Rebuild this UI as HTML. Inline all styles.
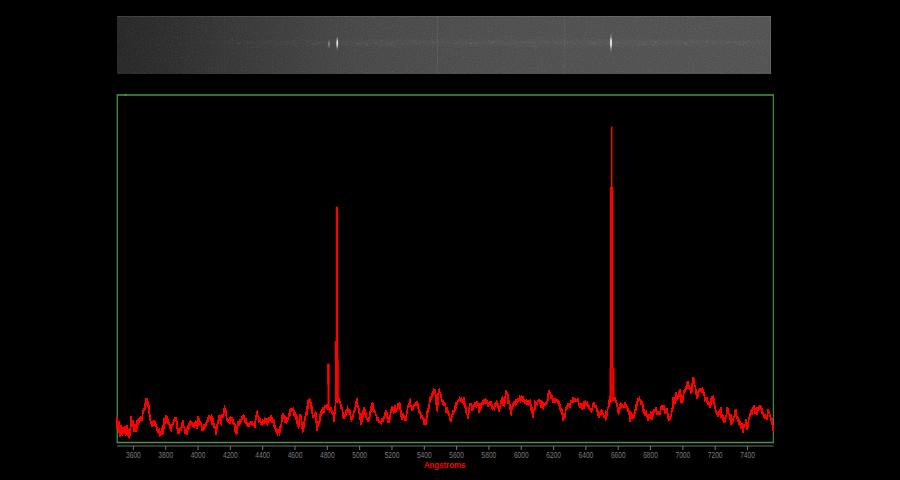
<!DOCTYPE html>
<html><head><meta charset="utf-8"><style>
html,body{margin:0;padding:0;background:#000;width:900px;height:480px;overflow:hidden}
svg{position:absolute;left:0;top:0;display:block}
</style></head><body>
<svg width="900" height="480" viewBox="0 0 900 480">
<defs>
<linearGradient id="sg" x1="117" y1="0" x2="771" y2="0" gradientUnits="userSpaceOnUse">
<stop offset="0" stop-color="#292929"/>
<stop offset="0.08" stop-color="#2f2f2f"/>
<stop offset="0.164" stop-color="#383838"/>
<stop offset="0.367" stop-color="#4a4a4a"/>
<stop offset="0.6" stop-color="#515151"/>
<stop offset="1" stop-color="#555555"/>
</linearGradient>
<linearGradient id="band" x1="0" y1="37" x2="0" y2="48" gradientUnits="userSpaceOnUse">
<stop offset="0" stop-color="#fff" stop-opacity="0"/>
<stop offset="0.5" stop-color="#fff" stop-opacity="0.035"/>
<stop offset="1" stop-color="#fff" stop-opacity="0"/>
</linearGradient>
<linearGradient id="bandx" x1="117" y1="0" x2="771" y2="0" gradientUnits="userSpaceOnUse">
<stop offset="0" stop-color="#fff" stop-opacity="0"/>
<stop offset="0.2" stop-color="#fff" stop-opacity="0.35"/>
<stop offset="0.4" stop-color="#fff" stop-opacity="0.8"/>
<stop offset="0.85" stop-color="#fff" stop-opacity="1"/>
<stop offset="1" stop-color="#fff" stop-opacity="0.3"/>
</linearGradient>
<mask id="bm"><rect x="117" y="16" width="654" height="58" fill="url(#bandx)"/></mask>
<radialGradient id="em"><stop offset="0" stop-color="#fafafa"/><stop offset="0.35" stop-color="#e0e0e0" stop-opacity="0.9"/><stop offset="0.6" stop-color="#aaa" stop-opacity="0.45"/><stop offset="1" stop-color="#777" stop-opacity="0"/></radialGradient>
<radialGradient id="em2"><stop offset="0" stop-color="#a0a0a0"/><stop offset="1" stop-color="#777" stop-opacity="0"/></radialGradient>
<filter id="nz" x="0" y="0" width="100%" height="100%" color-interpolation-filters="sRGB">
<feTurbulence type="fractalNoise" baseFrequency="0.8" numOctaves="1" seed="3"/>
<feColorMatrix type="matrix" values="0 0 0 0 1  0 0 0 0 1  0 0 0 0 1  0.2 0 0 0 -0.1"/>
</filter>
<filter id="nz2" x="0" y="0" width="100%" height="100%" color-interpolation-filters="sRGB">
<feTurbulence type="fractalNoise" baseFrequency="0.8" numOctaves="1" seed="3"/>
<feColorMatrix type="matrix" values="0 0 0 0 0  0 0 0 0 0  0 0 0 0 0  -0.2 0 0 0 0.1"/>
</filter>
</defs>
<rect x="117" y="16" width="654" height="58" fill="url(#sg)"/>
<rect x="117" y="16" width="654" height="58" filter="url(#nz)"/>
<rect x="117" y="16" width="654" height="58" filter="url(#nz2)"/>
<rect x="117" y="37" width="654" height="11" fill="url(#band)" mask="url(#bm)"/>
<rect x="117" y="16" width="654" height="1" fill="#fff" opacity="0.1"/>
<rect x="560.1" y="42.4" width="1" height="1" fill="#fff" opacity="0.10"/><rect x="675.4" y="39.7" width="1.5" height="1" fill="#fff" opacity="0.08"/><rect x="574.0" y="43.1" width="1.5" height="1" fill="#fff" opacity="0.06"/><rect x="431.8" y="42.0" width="1.5" height="1" fill="#fff" opacity="0.04"/><rect x="237.0" y="42.8" width="3" height="1" fill="#fff" opacity="0.09"/><rect x="314.6" y="43.8" width="1.5" height="1" fill="#fff" opacity="0.09"/><rect x="557.5" y="41.7" width="1" height="1" fill="#fff" opacity="0.10"/><rect x="341.0" y="42.8" width="1.5" height="1" fill="#fff" opacity="0.05"/><rect x="692.4" y="41.5" width="1.5" height="1" fill="#fff" opacity="0.07"/><rect x="326.3" y="46.5" width="1.5" height="1" fill="#fff" opacity="0.10"/><rect x="742.3" y="43.6" width="1.5" height="1" fill="#fff" opacity="0.06"/><rect x="726.0" y="41.7" width="2" height="1" fill="#fff" opacity="0.05"/><rect x="389.7" y="42.4" width="2" height="1" fill="#fff" opacity="0.08"/><rect x="265.0" y="42.4" width="2" height="1" fill="#fff" opacity="0.05"/><rect x="484.8" y="41.8" width="1" height="1" fill="#fff" opacity="0.08"/><rect x="365.8" y="44.2" width="2" height="1" fill="#fff" opacity="0.10"/><rect x="677.8" y="45.3" width="1" height="1" fill="#fff" opacity="0.06"/><rect x="470.0" y="42.8" width="1.5" height="1" fill="#fff" opacity="0.08"/><rect x="293.1" y="42.6" width="2" height="1" fill="#fff" opacity="0.06"/><rect x="703.1" y="45.5" width="3" height="1" fill="#fff" opacity="0.05"/><rect x="287.3" y="42.5" width="1" height="1" fill="#fff" opacity="0.09"/><rect x="459.5" y="39.6" width="1.5" height="1" fill="#fff" opacity="0.10"/><rect x="410.6" y="39.8" width="1" height="1" fill="#fff" opacity="0.05"/><rect x="395.6" y="40.2" width="1.5" height="1" fill="#fff" opacity="0.05"/><rect x="653.4" y="40.7" width="3" height="1" fill="#fff" opacity="0.05"/><rect x="315.6" y="40.7" width="3" height="1" fill="#fff" opacity="0.03"/><rect x="246.9" y="42.4" width="3" height="1" fill="#fff" opacity="0.05"/><rect x="307.2" y="41.0" width="1" height="1" fill="#fff" opacity="0.10"/><rect x="654.9" y="42.0" width="1.5" height="1" fill="#fff" opacity="0.10"/><rect x="564.1" y="43.4" width="1" height="1" fill="#fff" opacity="0.09"/><rect x="319.5" y="42.1" width="1.5" height="1" fill="#fff" opacity="0.06"/><rect x="470.2" y="42.9" width="1.5" height="1" fill="#fff" opacity="0.10"/><rect x="747.3" y="40.7" width="3" height="1" fill="#fff" opacity="0.08"/><rect x="375.2" y="43.0" width="1.5" height="1" fill="#fff" opacity="0.06"/><rect x="289.7" y="43.4" width="3" height="1" fill="#fff" opacity="0.04"/><rect x="689.9" y="40.7" width="3" height="1" fill="#fff" opacity="0.04"/><rect x="374.3" y="43.1" width="2" height="1" fill="#fff" opacity="0.06"/><rect x="598.1" y="39.3" width="2" height="1" fill="#fff" opacity="0.08"/><rect x="422.6" y="42.1" width="2" height="1" fill="#fff" opacity="0.06"/><rect x="737.1" y="41.3" width="1.5" height="1" fill="#fff" opacity="0.05"/><rect x="537.8" y="44.5" width="2" height="1" fill="#fff" opacity="0.05"/><rect x="475.4" y="42.6" width="2" height="1" fill="#fff" opacity="0.09"/><rect x="414.4" y="40.9" width="2" height="1" fill="#fff" opacity="0.09"/><rect x="718.8" y="40.4" width="3" height="1" fill="#fff" opacity="0.04"/><rect x="747.3" y="44.4" width="1.5" height="1" fill="#fff" opacity="0.07"/><rect x="335.3" y="42.0" width="3" height="1" fill="#fff" opacity="0.06"/><rect x="379.9" y="44.6" width="3" height="1" fill="#fff" opacity="0.06"/><rect x="390.4" y="43.6" width="2" height="1" fill="#fff" opacity="0.07"/><rect x="611.8" y="43.4" width="1.5" height="1" fill="#fff" opacity="0.06"/><rect x="346.1" y="42.7" width="1" height="1" fill="#fff" opacity="0.08"/><rect x="752.8" y="43.5" width="1" height="1" fill="#fff" opacity="0.09"/><rect x="398.2" y="42.4" width="1.5" height="1" fill="#fff" opacity="0.04"/><rect x="520.6" y="41.2" width="1" height="1" fill="#fff" opacity="0.08"/><rect x="542.8" y="43.3" width="2" height="1" fill="#fff" opacity="0.05"/><rect x="230.4" y="41.4" width="1" height="1" fill="#fff" opacity="0.06"/><rect x="595.1" y="43.2" width="1" height="1" fill="#fff" opacity="0.07"/><rect x="521.5" y="42.1" width="2" height="1" fill="#fff" opacity="0.07"/><rect x="737.9" y="43.8" width="3" height="1" fill="#fff" opacity="0.09"/><rect x="446.9" y="40.7" width="1.5" height="1" fill="#fff" opacity="0.06"/><rect x="545.8" y="41.7" width="1.5" height="1" fill="#fff" opacity="0.07"/><rect x="743.0" y="41.3" width="1" height="1" fill="#fff" opacity="0.09"/><rect x="432.4" y="41.6" width="1.5" height="1" fill="#fff" opacity="0.05"/><rect x="402.5" y="44.0" width="1.5" height="1" fill="#fff" opacity="0.06"/><rect x="491.5" y="41.1" width="3" height="1" fill="#fff" opacity="0.06"/><rect x="433.5" y="43.1" width="2" height="1" fill="#fff" opacity="0.07"/><rect x="493.0" y="41.8" width="2" height="1" fill="#fff" opacity="0.06"/><rect x="730.9" y="41.2" width="1" height="1" fill="#fff" opacity="0.04"/><rect x="294.6" y="45.9" width="3" height="1" fill="#fff" opacity="0.07"/><rect x="360.1" y="43.3" width="3" height="1" fill="#fff" opacity="0.06"/><rect x="512.3" y="42.7" width="3" height="1" fill="#fff" opacity="0.05"/><rect x="644.4" y="42.5" width="2" height="1" fill="#fff" opacity="0.04"/><rect x="385.4" y="43.8" width="3" height="1" fill="#fff" opacity="0.07"/><rect x="504.7" y="44.7" width="1" height="1" fill="#fff" opacity="0.09"/><rect x="633.0" y="40.0" width="2" height="1" fill="#fff" opacity="0.05"/><rect x="555.2" y="42.5" width="1.5" height="1" fill="#fff" opacity="0.05"/><rect x="249.3" y="42.1" width="3" height="1" fill="#fff" opacity="0.05"/><rect x="593.4" y="44.4" width="3" height="1" fill="#fff" opacity="0.04"/><rect x="642.5" y="44.0" width="3" height="1" fill="#fff" opacity="0.06"/><rect x="685.1" y="43.5" width="1.5" height="1" fill="#fff" opacity="0.08"/><rect x="706.4" y="41.0" width="1" height="1" fill="#fff" opacity="0.06"/><rect x="390.9" y="45.3" width="3" height="1" fill="#fff" opacity="0.07"/><rect x="712.7" y="42.6" width="3" height="1" fill="#fff" opacity="0.04"/><rect x="598.5" y="45.8" width="3" height="1" fill="#fff" opacity="0.07"/><rect x="540.5" y="39.7" width="1" height="1" fill="#fff" opacity="0.09"/><rect x="618.3" y="42.4" width="1" height="1" fill="#fff" opacity="0.03"/><rect x="406.5" y="43.2" width="1" height="1" fill="#fff" opacity="0.06"/><rect x="759.1" y="42.3" width="1.5" height="1" fill="#fff" opacity="0.09"/><rect x="555.7" y="42.0" width="1" height="1" fill="#fff" opacity="0.09"/><rect x="607.6" y="43.4" width="1.5" height="1" fill="#fff" opacity="0.09"/><rect x="327.0" y="43.5" width="1.5" height="1" fill="#fff" opacity="0.04"/><rect x="265.6" y="43.0" width="1" height="1" fill="#fff" opacity="0.08"/><rect x="378.3" y="44.5" width="1" height="1" fill="#fff" opacity="0.07"/><rect x="623.4" y="43.1" width="2" height="1" fill="#fff" opacity="0.06"/><rect x="593.3" y="41.9" width="2" height="1" fill="#fff" opacity="0.06"/><rect x="727.4" y="42.1" width="1.5" height="1" fill="#fff" opacity="0.08"/><rect x="531.4" y="42.9" width="2" height="1" fill="#fff" opacity="0.08"/><rect x="712.5" y="40.4" width="1.5" height="1" fill="#fff" opacity="0.05"/><rect x="364.7" y="41.7" width="1.5" height="1" fill="#fff" opacity="0.08"/><rect x="658.3" y="43.7" width="1.5" height="1" fill="#fff" opacity="0.06"/><rect x="608.0" y="41.2" width="1" height="1" fill="#fff" opacity="0.08"/><rect x="533.8" y="45.6" width="3" height="1" fill="#fff" opacity="0.07"/><rect x="356.5" y="43.2" width="3" height="1" fill="#fff" opacity="0.09"/><rect x="740.5" y="44.0" width="3" height="1" fill="#fff" opacity="0.07"/><rect x="258.4" y="43.7" width="3" height="1" fill="#fff" opacity="0.04"/><rect x="591.0" y="42.6" width="3" height="1" fill="#fff" opacity="0.10"/><rect x="664.9" y="43.3" width="3" height="1" fill="#fff" opacity="0.04"/><rect x="417.8" y="42.6" width="2" height="1" fill="#fff" opacity="0.07"/><rect x="651.9" y="43.9" width="2" height="1" fill="#fff" opacity="0.06"/><rect x="573.4" y="43.1" width="1" height="1" fill="#fff" opacity="0.09"/><rect x="544.1" y="40.9" width="1.5" height="1" fill="#fff" opacity="0.07"/><rect x="439.6" y="42.8" width="1" height="1" fill="#fff" opacity="0.04"/><rect x="489.7" y="42.7" width="2" height="1" fill="#fff" opacity="0.10"/><rect x="230.2" y="39.2" width="3" height="1" fill="#fff" opacity="0.07"/><rect x="401.3" y="43.1" width="1.5" height="1" fill="#fff" opacity="0.06"/><rect x="312.0" y="43.3" width="3" height="1" fill="#fff" opacity="0.06"/><rect x="310.6" y="43.8" width="2" height="1" fill="#fff" opacity="0.05"/><rect x="663.8" y="42.5" width="1" height="1" fill="#fff" opacity="0.03"/><rect x="412.5" y="40.1" width="2" height="1" fill="#fff" opacity="0.08"/><rect x="727.1" y="41.6" width="1.5" height="1" fill="#fff" opacity="0.06"/><rect x="292.5" y="40.3" width="2" height="1" fill="#fff" opacity="0.08"/><rect x="470.6" y="42.8" width="1" height="1" fill="#fff" opacity="0.03"/><rect x="534.6" y="47.6" width="3" height="1" fill="#fff" opacity="0.08"/><rect x="713.2" y="41.9" width="2" height="1" fill="#fff" opacity="0.04"/><rect x="380.1" y="40.2" width="3" height="1" fill="#fff" opacity="0.08"/><rect x="316.6" y="42.6" width="3" height="1" fill="#fff" opacity="0.10"/><rect x="615.0" y="44.9" width="3" height="1" fill="#fff" opacity="0.05"/><rect x="262.3" y="42.8" width="2" height="1" fill="#fff" opacity="0.03"/><rect x="727.9" y="40.9" width="1.5" height="1" fill="#fff" opacity="0.08"/><rect x="706.4" y="38.8" width="1.5" height="1" fill="#fff" opacity="0.03"/><rect x="571.5" y="42.7" width="1" height="1" fill="#fff" opacity="0.06"/><rect x="255.4" y="43.4" width="1" height="1" fill="#fff" opacity="0.07"/><rect x="733.6" y="41.0" width="3" height="1" fill="#fff" opacity="0.04"/><rect x="329.7" y="42.9" width="1" height="1" fill="#fff" opacity="0.09"/><rect x="517.2" y="46.1" width="1" height="1" fill="#fff" opacity="0.09"/><rect x="684.1" y="42.6" width="3" height="1" fill="#fff" opacity="0.07"/><rect x="454.3" y="42.8" width="1.5" height="1" fill="#fff" opacity="0.08"/><rect x="614.6" y="43.7" width="1.5" height="1" fill="#fff" opacity="0.06"/><rect x="523.9" y="41.8" width="3" height="1" fill="#fff" opacity="0.04"/><rect x="276.4" y="42.9" width="1.5" height="1" fill="#fff" opacity="0.05"/><rect x="514.5" y="39.6" width="1" height="1" fill="#fff" opacity="0.06"/><rect x="653.4" y="44.8" width="3" height="1" fill="#fff" opacity="0.05"/><rect x="601.3" y="42.0" width="1.5" height="1" fill="#fff" opacity="0.03"/><rect x="652.0" y="45.0" width="2" height="1" fill="#fff" opacity="0.04"/><rect x="431.3" y="40.3" width="1" height="1" fill="#fff" opacity="0.08"/><rect x="704.9" y="41.0" width="3" height="1" fill="#fff" opacity="0.07"/><rect x="306.0" y="40.3" width="1" height="1" fill="#fff" opacity="0.08"/><rect x="615.9" y="42.1" width="3" height="1" fill="#fff" opacity="0.09"/><rect x="527.8" y="41.3" width="2" height="1" fill="#fff" opacity="0.05"/><rect x="319.8" y="42.3" width="1" height="1" fill="#fff" opacity="0.05"/><rect x="517.5" y="44.9" width="1" height="1" fill="#fff" opacity="0.08"/><rect x="244.6" y="43.3" width="2" height="1" fill="#fff" opacity="0.06"/><rect x="733.1" y="42.8" width="1.5" height="1" fill="#fff" opacity="0.07"/><rect x="509.5" y="43.3" width="1.5" height="1" fill="#fff" opacity="0.06"/><rect x="539.7" y="43.3" width="1" height="1" fill="#fff" opacity="0.09"/><rect x="372.1" y="40.7" width="3" height="1" fill="#fff" opacity="0.04"/><rect x="651.2" y="41.1" width="2" height="1" fill="#fff" opacity="0.04"/><rect x="466.3" y="42.8" width="1" height="1" fill="#fff" opacity="0.04"/><rect x="636.8" y="44.6" width="3" height="1" fill="#fff" opacity="0.10"/><rect x="743.9" y="41.9" width="3" height="1" fill="#fff" opacity="0.09"/><rect x="593.3" y="42.1" width="1" height="1" fill="#fff" opacity="0.04"/><rect x="138.5" y="49.3" width="1" height="1" fill="#fff" opacity="0.09"/><rect x="692.8" y="39.0" width="1" height="1" fill="#fff" opacity="0.07"/><rect x="297.9" y="28.3" width="1" height="1" fill="#fff" opacity="0.10"/><rect x="350.1" y="59.1" width="1" height="1" fill="#fff" opacity="0.07"/><rect x="346.7" y="30.9" width="1" height="1" fill="#fff" opacity="0.14"/><rect x="665.7" y="64.6" width="1" height="1" fill="#fff" opacity="0.11"/><rect x="378.8" y="25.0" width="1" height="1" fill="#fff" opacity="0.12"/><rect x="437.0" y="19.1" width="1" height="1" fill="#fff" opacity="0.07"/><rect x="181.5" y="57.2" width="1" height="1" fill="#fff" opacity="0.13"/><rect x="247.2" y="61.6" width="1" height="1" fill="#fff" opacity="0.08"/><rect x="562.9" y="65.3" width="1" height="1" fill="#fff" opacity="0.11"/><rect x="639.6" y="38.1" width="1" height="1" fill="#fff" opacity="0.05"/><rect x="451.2" y="49.9" width="1" height="1" fill="#fff" opacity="0.07"/><rect x="371.1" y="34.8" width="1" height="1" fill="#fff" opacity="0.05"/><rect x="320.8" y="38.4" width="1" height="1" fill="#fff" opacity="0.09"/><rect x="576.3" y="39.3" width="1" height="1" fill="#fff" opacity="0.14"/><rect x="649.5" y="68.7" width="1" height="1" fill="#fff" opacity="0.11"/><rect x="554.6" y="47.1" width="1" height="1" fill="#fff" opacity="0.12"/><rect x="353.9" y="50.2" width="1" height="1" fill="#fff" opacity="0.11"/><rect x="458.0" y="32.9" width="1" height="1" fill="#fff" opacity="0.06"/><rect x="174.0" y="36.9" width="1" height="1" fill="#fff" opacity="0.10"/><rect x="613.0" y="57.0" width="1" height="1" fill="#fff" opacity="0.08"/><rect x="723.8" y="32.4" width="1" height="1" fill="#fff" opacity="0.11"/><rect x="164.0" y="59.2" width="1" height="1" fill="#fff" opacity="0.11"/><rect x="741.9" y="67.2" width="1" height="1" fill="#fff" opacity="0.11"/><rect x="664.4" y="58.4" width="1" height="1" fill="#fff" opacity="0.10"/><rect x="253.3" y="45.9" width="1" height="1" fill="#fff" opacity="0.13"/><rect x="273.1" y="71.6" width="1" height="1" fill="#fff" opacity="0.10"/><rect x="373.9" y="17.2" width="1" height="1" fill="#fff" opacity="0.09"/><rect x="233.3" y="53.6" width="1" height="1" fill="#fff" opacity="0.13"/><rect x="711.3" y="51.4" width="1" height="1" fill="#fff" opacity="0.08"/><rect x="188.1" y="55.6" width="1" height="1" fill="#fff" opacity="0.10"/><rect x="584.1" y="37.9" width="1" height="1" fill="#fff" opacity="0.13"/><rect x="255.9" y="34.1" width="1" height="1" fill="#fff" opacity="0.07"/><rect x="523.3" y="67.2" width="1" height="1" fill="#fff" opacity="0.07"/><rect x="530.2" y="59.9" width="1" height="1" fill="#fff" opacity="0.07"/><rect x="157.9" y="48.7" width="1" height="1" fill="#fff" opacity="0.12"/><rect x="690.7" y="57.8" width="1" height="1" fill="#fff" opacity="0.09"/><rect x="394.8" y="46.6" width="1" height="1" fill="#fff" opacity="0.13"/><rect x="314.4" y="32.7" width="1" height="1" fill="#fff" opacity="0.10"/><rect x="748.2" y="27.5" width="1" height="1" fill="#fff" opacity="0.05"/><rect x="192.5" y="48.5" width="1" height="1" fill="#fff" opacity="0.10"/><rect x="237.1" y="27.7" width="1" height="1" fill="#fff" opacity="0.10"/><rect x="539.1" y="55.7" width="1" height="1" fill="#fff" opacity="0.12"/><rect x="157.1" y="44.1" width="1" height="1" fill="#fff" opacity="0.13"/><rect x="742.1" y="34.8" width="1" height="1" fill="#fff" opacity="0.13"/><rect x="538.3" y="68.9" width="1" height="1" fill="#fff" opacity="0.07"/><rect x="572.0" y="64.1" width="1" height="1" fill="#fff" opacity="0.09"/><rect x="182.8" y="27.8" width="1" height="1" fill="#fff" opacity="0.06"/><rect x="177.6" y="25.5" width="1" height="1" fill="#fff" opacity="0.11"/><rect x="185.5" y="59.5" width="1" height="1" fill="#fff" opacity="0.12"/><rect x="650.1" y="62.0" width="1" height="1" fill="#fff" opacity="0.11"/><rect x="720.4" y="70.6" width="1" height="1" fill="#fff" opacity="0.11"/><rect x="747.2" y="22.8" width="1" height="1" fill="#fff" opacity="0.06"/><rect x="159.1" y="28.6" width="1" height="1" fill="#fff" opacity="0.08"/><rect x="416.5" y="55.1" width="1" height="1" fill="#fff" opacity="0.12"/><rect x="171.7" y="39.6" width="1" height="1" fill="#fff" opacity="0.10"/><rect x="362.0" y="23.6" width="1" height="1" fill="#fff" opacity="0.10"/><rect x="361.5" y="55.3" width="1" height="1" fill="#fff" opacity="0.09"/><rect x="745.6" y="69.9" width="1" height="1" fill="#fff" opacity="0.06"/><rect x="613.1" y="57.4" width="1" height="1" fill="#fff" opacity="0.08"/><rect x="193.3" y="43.8" width="1" height="1" fill="#fff" opacity="0.08"/><rect x="598.5" y="68.4" width="1" height="1" fill="#fff" opacity="0.08"/><rect x="306.8" y="44.9" width="1" height="1" fill="#fff" opacity="0.11"/><rect x="632.2" y="49.2" width="1" height="1" fill="#fff" opacity="0.08"/><rect x="337.0" y="64.5" width="1" height="1" fill="#fff" opacity="0.10"/><rect x="149.9" y="40.6" width="1" height="1" fill="#fff" opacity="0.07"/><rect x="552.0" y="21.1" width="1" height="1" fill="#fff" opacity="0.07"/><rect x="179.7" y="43.7" width="1" height="1" fill="#fff" opacity="0.14"/><rect x="470.5" y="38.6" width="1" height="1" fill="#fff" opacity="0.13"/><rect x="177.0" y="36.9" width="1" height="1" fill="#fff" opacity="0.12"/><rect x="120.3" y="59.9" width="1" height="1" fill="#fff" opacity="0.08"/><rect x="127.7" y="31.0" width="1" height="1" fill="#fff" opacity="0.09"/><rect x="367.0" y="45.9" width="1" height="1" fill="#fff" opacity="0.05"/><rect x="259.7" y="71.6" width="1" height="1" fill="#fff" opacity="0.09"/><rect x="425.1" y="21.8" width="1" height="1" fill="#fff" opacity="0.08"/><rect x="740.5" y="55.5" width="1" height="1" fill="#fff" opacity="0.10"/><rect x="151.6" y="39.0" width="1" height="1" fill="#fff" opacity="0.12"/><rect x="400.9" y="50.2" width="1" height="1" fill="#fff" opacity="0.13"/><rect x="538.3" y="52.6" width="1" height="1" fill="#fff" opacity="0.05"/><rect x="132.6" y="60.1" width="1" height="1" fill="#fff" opacity="0.09"/><rect x="687.9" y="63.2" width="1" height="1" fill="#fff" opacity="0.13"/><rect x="364.2" y="72.9" width="1" height="1" fill="#fff" opacity="0.12"/><rect x="699.3" y="25.3" width="1" height="1" fill="#fff" opacity="0.12"/><rect x="392.7" y="71.4" width="1" height="1" fill="#fff" opacity="0.14"/><rect x="258.5" y="40.6" width="1" height="1" fill="#fff" opacity="0.07"/><rect x="423.8" y="33.0" width="1" height="1" fill="#fff" opacity="0.11"/><rect x="197.5" y="26.5" width="1" height="1" fill="#fff" opacity="0.09"/><rect x="165.3" y="38.3" width="1" height="1" fill="#fff" opacity="0.13"/><rect x="695.1" y="28.0" width="1" height="1" fill="#fff" opacity="0.05"/><rect x="657.9" y="70.8" width="1" height="1" fill="#fff" opacity="0.10"/><rect x="206.0" y="30.2" width="1" height="1" fill="#fff" opacity="0.13"/><rect x="729.2" y="18.7" width="1" height="1" fill="#fff" opacity="0.07"/><rect x="397.1" y="31.9" width="1" height="1" fill="#fff" opacity="0.12"/><rect x="360.5" y="60.4" width="1" height="1" fill="#fff" opacity="0.06"/><rect x="455.5" y="71.6" width="1" height="1" fill="#fff" opacity="0.11"/><rect x="175.8" y="23.2" width="1" height="1" fill="#fff" opacity="0.11"/><rect x="361.9" y="37.6" width="1" height="1" fill="#fff" opacity="0.09"/><rect x="496.9" y="71.1" width="1" height="1" fill="#fff" opacity="0.07"/><rect x="488.3" y="31.7" width="1" height="1" fill="#fff" opacity="0.10"/><rect x="594.6" y="24.5" width="1" height="1" fill="#fff" opacity="0.09"/><rect x="577.9" y="17.5" width="1" height="1" fill="#fff" opacity="0.12"/><rect x="390.5" y="45.2" width="1" height="1" fill="#fff" opacity="0.10"/><rect x="634.8" y="20.1" width="1" height="1" fill="#fff" opacity="0.10"/><rect x="142.0" y="38.6" width="1" height="1" fill="#fff" opacity="0.08"/><rect x="131.0" y="33.7" width="1" height="1" fill="#fff" opacity="0.09"/><rect x="544.6" y="68.8" width="1" height="1" fill="#fff" opacity="0.08"/><rect x="463.1" y="56.9" width="1" height="1" fill="#fff" opacity="0.13"/><rect x="737.1" y="72.3" width="1" height="1" fill="#fff" opacity="0.08"/><rect x="225.8" y="69.2" width="1" height="1" fill="#fff" opacity="0.06"/><rect x="410.0" y="58.2" width="1" height="1" fill="#fff" opacity="0.10"/><rect x="370.9" y="68.8" width="1" height="1" fill="#fff" opacity="0.08"/><rect x="477.3" y="63.5" width="1" height="1" fill="#fff" opacity="0.06"/><rect x="346.2" y="44.7" width="1" height="1" fill="#fff" opacity="0.10"/><rect x="252.4" y="42.4" width="1" height="1" fill="#fff" opacity="0.06"/><rect x="174.4" y="36.2" width="1" height="1" fill="#fff" opacity="0.06"/><rect x="748.8" y="31.7" width="1" height="1" fill="#fff" opacity="0.07"/><rect x="628.8" y="58.5" width="1" height="1" fill="#fff" opacity="0.07"/><rect x="658.4" y="52.0" width="1" height="1" fill="#fff" opacity="0.08"/><rect x="527.6" y="30.8" width="1" height="1" fill="#fff" opacity="0.07"/>
<rect x="224" y="16" width="1" height="58" fill="#fff" opacity="0.025"/>
<rect x="437" y="16" width="1" height="58" fill="#fff" opacity="0.06"/>
<rect x="564" y="16" width="1" height="58" fill="#fff" opacity="0.05"/>
<rect x="770" y="16" width="1" height="58" fill="#fff" opacity="0.08"/>
<ellipse cx="329" cy="44" rx="1.5" ry="5" fill="url(#em2)"/>
<ellipse cx="337.2" cy="43.2" rx="1.6" ry="8.5" fill="url(#em)"/>
<ellipse cx="611" cy="42.8" rx="1.9" ry="11" fill="url(#em)"/>
<g stroke="#3f8f3f"><line x1="117.3" y1="95" x2="773.1" y2="95" stroke-width="2" stroke="#357035"/>
<line x1="117.3" y1="94" x2="117.3" y2="443" stroke-width="1.4" stroke="#3c863c"/>
<line x1="773.4" y1="94" x2="773.4" y2="443" stroke-width="1.3" stroke="#408640"/>
<line x1="116.8" y1="442.5" x2="774" y2="442.5" stroke-width="1.3" stroke="#4a904a"/></g>
<rect x="124.8" y="94.2" width="1.6" height="1.4" fill="#ccc" opacity="0.45"/>
<line x1="117" y1="446" x2="773.6" y2="446" stroke="#363636" stroke-width="2"/>
<g stroke="#777" stroke-width="1"><line x1="133.40" y1="446" x2="133.40" y2="450"/><line x1="165.72" y1="446" x2="165.72" y2="450"/><line x1="198.04" y1="446" x2="198.04" y2="450"/><line x1="230.37" y1="446" x2="230.37" y2="450"/><line x1="262.69" y1="446" x2="262.69" y2="450"/><line x1="295.01" y1="446" x2="295.01" y2="450"/><line x1="327.33" y1="446" x2="327.33" y2="450"/><line x1="359.65" y1="446" x2="359.65" y2="450"/><line x1="391.98" y1="446" x2="391.98" y2="450"/><line x1="424.30" y1="446" x2="424.30" y2="450"/><line x1="456.62" y1="446" x2="456.62" y2="450"/><line x1="488.94" y1="446" x2="488.94" y2="450"/><line x1="521.26" y1="446" x2="521.26" y2="450"/><line x1="553.59" y1="446" x2="553.59" y2="450"/><line x1="585.91" y1="446" x2="585.91" y2="450"/><line x1="618.23" y1="446" x2="618.23" y2="450"/><line x1="650.55" y1="446" x2="650.55" y2="450"/><line x1="682.87" y1="446" x2="682.87" y2="450"/><line x1="715.20" y1="446" x2="715.20" y2="450"/><line x1="747.52" y1="446" x2="747.52" y2="450"/></g>
<g fill="#7c7c7c" font-family="Liberation Sans, sans-serif" font-size="8.2"><text x="126.05" y="457.8" textLength="14.7" lengthAdjust="spacingAndGlyphs">3600</text><text x="158.37" y="457.8" textLength="14.7" lengthAdjust="spacingAndGlyphs">3800</text><text x="190.69" y="457.8" textLength="14.7" lengthAdjust="spacingAndGlyphs">4000</text><text x="223.02" y="457.8" textLength="14.7" lengthAdjust="spacingAndGlyphs">4200</text><text x="255.34" y="457.8" textLength="14.7" lengthAdjust="spacingAndGlyphs">4400</text><text x="287.66" y="457.8" textLength="14.7" lengthAdjust="spacingAndGlyphs">4600</text><text x="319.98" y="457.8" textLength="14.7" lengthAdjust="spacingAndGlyphs">4800</text><text x="352.30" y="457.8" textLength="14.7" lengthAdjust="spacingAndGlyphs">5000</text><text x="384.63" y="457.8" textLength="14.7" lengthAdjust="spacingAndGlyphs">5200</text><text x="416.95" y="457.8" textLength="14.7" lengthAdjust="spacingAndGlyphs">5400</text><text x="449.27" y="457.8" textLength="14.7" lengthAdjust="spacingAndGlyphs">5600</text><text x="481.59" y="457.8" textLength="14.7" lengthAdjust="spacingAndGlyphs">5800</text><text x="513.91" y="457.8" textLength="14.7" lengthAdjust="spacingAndGlyphs">6000</text><text x="546.24" y="457.8" textLength="14.7" lengthAdjust="spacingAndGlyphs">6200</text><text x="578.56" y="457.8" textLength="14.7" lengthAdjust="spacingAndGlyphs">6400</text><text x="610.88" y="457.8" textLength="14.7" lengthAdjust="spacingAndGlyphs">6600</text><text x="643.20" y="457.8" textLength="14.7" lengthAdjust="spacingAndGlyphs">6800</text><text x="675.52" y="457.8" textLength="14.7" lengthAdjust="spacingAndGlyphs">7000</text><text x="707.85" y="457.8" textLength="14.7" lengthAdjust="spacingAndGlyphs">7200</text><text x="740.17" y="457.8" textLength="14.7" lengthAdjust="spacingAndGlyphs">7400</text></g>
<text x="423.9" y="467.6" fill="#ff0000" font-family="Liberation Sans, sans-serif" font-size="8.6" font-weight="bold" textLength="41.4" lengthAdjust="spacingAndGlyphs">Angstroms</text>
<path d="M117.0,417.2 L117.4,428.6 L117.8,425.3 L118.2,423.9 L118.6,433.4 L119.0,428.0 L119.4,421.1 L119.8,432.6 L120.2,436.6 L120.6,428.4 L121.0,424.6 L121.4,429.2 L121.8,434.2 L122.2,434.4 L122.6,429.5 L123.0,427.4 L123.4,432.1 L123.8,433.5 L124.2,429.9 L124.6,429.8 L125.0,425.9 L125.4,427.5 L125.8,429.2 L126.2,433.4 L126.6,432.7 L127.0,425.5 L127.4,430.3 L127.8,428.7 L128.2,435.6 L128.6,433.7 L129.0,438.3 L129.4,437.0 L129.8,434.7 L130.2,433.6 L130.6,422.8 L131.0,416.5 L131.4,425.7 L131.8,427.2 L132.2,425.2 L132.6,423.4 L133.0,419.6 L133.4,424.5 L133.8,431.6 L134.2,423.6 L134.6,427.1 L135.0,425.7 L135.4,427.3 L135.8,429.7 L136.2,432.1 L136.6,425.9 L137.0,426.6 L137.4,420.2 L137.8,420.9 L138.2,422.6 L138.6,421.2 L139.0,422.4 L139.4,418.0 L139.8,418.5 L140.2,420.7 L140.6,418.1 L141.0,416.3 L141.4,418.6 L141.8,419.3 L142.2,420.5 L142.6,413.7 L143.0,410.1 L143.4,411.5 L143.8,408.3 L144.2,411.2 L144.6,409.8 L145.0,403.4 L145.4,403.0 L145.8,405.0 L146.2,400.4 L146.6,401.1 L147.0,399.4 L147.4,397.9 L147.8,403.2 L148.2,406.0 L148.6,408.2 L149.0,407.6 L149.4,413.6 L149.8,414.6 L150.2,420.0 L150.6,422.4 L151.0,424.3 L151.4,421.0 L151.8,426.0 L152.2,425.9 L152.6,426.0 L153.0,424.2 L153.4,421.4 L153.8,420.3 L154.2,423.0 L154.6,425.3 L155.0,425.5 L155.4,421.4 L155.8,425.9 L156.2,424.0 L156.6,427.2 L157.0,430.2 L157.4,430.2 L157.8,429.2 L158.2,432.6 L158.6,430.8 L159.0,430.3 L159.4,434.1 L159.8,435.0 L160.2,432.5 L160.6,433.0 L161.0,434.4 L161.4,433.7 L161.8,434.7 L162.2,426.8 L162.6,434.3 L163.0,429.4 L163.4,425.4 L163.8,429.0 L164.2,417.7 L164.6,422.8 L165.0,421.9 L165.4,422.7 L165.8,422.0 L166.2,415.4 L166.6,419.6 L167.0,417.3 L167.4,418.4 L167.8,420.6 L168.2,423.5 L168.6,425.2 L169.0,421.9 L169.4,425.2 L169.8,426.8 L170.2,426.2 L170.6,429.5 L171.0,430.0 L171.4,427.7 L171.8,426.9 L172.2,425.6 L172.6,421.8 L173.0,425.2 L173.4,422.7 L173.8,420.0 L174.2,422.1 L174.6,417.2 L175.0,418.2 L175.4,421.2 L175.8,417.0 L176.2,418.5 L176.6,420.6 L177.0,425.1 L177.4,428.6 L177.8,431.5 L178.2,430.7 L178.6,432.5 L179.0,432.8 L179.4,430.8 L179.8,429.9 L180.2,427.8 L180.6,430.0 L181.0,429.8 L181.4,427.0 L181.8,423.5 L182.2,423.9 L182.6,420.3 L183.0,423.5 L183.4,427.5 L183.8,427.6 L184.2,425.9 L184.6,428.6 L185.0,433.7 L185.4,432.7 L185.8,434.3 L186.2,431.9 L186.6,428.8 L187.0,435.0 L187.4,426.8 L187.8,426.1 L188.2,426.0 L188.6,429.7 L189.0,424.1 L189.4,423.4 L189.8,424.6 L190.2,423.4 L190.6,420.6 L191.0,424.2 L191.4,423.9 L191.8,424.4 L192.2,422.2 L192.6,425.3 L193.0,423.1 L193.4,426.5 L193.8,428.1 L194.2,423.0 L194.6,425.4 L195.0,422.1 L195.4,423.3 L195.8,421.8 L196.2,422.1 L196.6,425.6 L197.0,427.3 L197.4,426.1 L197.8,424.9 L198.2,415.6 L198.6,421.6 L199.0,418.6 L199.4,419.1 L199.8,423.5 L200.2,424.7 L200.6,422.4 L201.0,422.9 L201.4,425.1 L201.8,429.2 L202.2,430.1 L202.6,429.3 L203.0,429.5 L203.4,426.6 L203.8,424.1 L204.2,427.7 L204.6,428.4 L205.0,424.9 L205.4,423.8 L205.8,424.7 L206.2,424.9 L206.6,423.4 L207.0,419.8 L207.4,421.6 L207.8,421.3 L208.2,418.7 L208.6,415.6 L209.0,415.6 L209.4,418.4 L209.8,416.0 L210.2,417.9 L210.6,418.2 L211.0,417.3 L211.4,420.6 L211.8,420.6 L212.2,424.4 L212.6,423.3 L213.0,418.9 L213.4,419.6 L213.8,426.4 L214.2,425.9 L214.6,427.0 L215.0,428.5 L215.4,426.1 L215.8,435.0 L216.2,427.0 L216.6,424.8 L217.0,430.4 L217.4,424.1 L217.8,423.7 L218.2,420.6 L218.6,420.4 L219.0,420.4 L219.4,415.0 L219.8,416.0 L220.2,414.9 L220.6,422.1 L221.0,422.9 L221.4,415.6 L221.8,417.8 L222.2,415.2 L222.6,415.3 L223.0,416.6 L223.4,415.5 L223.8,412.2 L224.2,408.6 L224.6,407.6 L225.0,410.4 L225.4,408.3 L225.8,410.7 L226.2,413.5 L226.6,418.4 L227.0,420.5 L227.4,420.9 L227.8,419.2 L228.2,421.1 L228.6,421.3 L229.0,422.6 L229.4,420.0 L229.8,423.8 L230.2,416.9 L230.6,420.0 L231.0,418.0 L231.4,418.7 L231.8,419.6 L232.2,419.0 L232.6,418.6 L233.0,422.9 L233.4,423.6 L233.8,424.2 L234.2,423.4 L234.6,424.2 L235.0,425.9 L235.4,431.3 L235.8,430.8 L236.2,433.8 L236.6,434.1 L237.0,427.1 L237.4,427.2 L237.8,425.5 L238.2,422.9 L238.6,423.2 L239.0,425.5 L239.4,420.6 L239.8,423.5 L240.2,419.4 L240.6,420.7 L241.0,422.9 L241.4,419.8 L241.8,417.6 L242.2,417.0 L242.6,419.5 L243.0,416.3 L243.4,415.2 L243.8,415.9 L244.2,417.7 L244.6,418.6 L245.0,422.1 L245.4,422.4 L245.8,418.2 L246.2,420.8 L246.6,424.8 L247.0,426.0 L247.4,422.1 L247.8,427.2 L248.2,424.0 L248.6,424.3 L249.0,427.3 L249.4,424.2 L249.8,424.4 L250.2,422.7 L250.6,425.1 L251.0,421.9 L251.4,421.6 L251.8,421.9 L252.2,422.1 L252.6,423.0 L253.0,423.8 L253.4,425.4 L253.8,423.6 L254.2,425.4 L254.6,426.5 L255.0,427.9 L255.4,420.8 L255.8,418.4 L256.2,417.4 L256.6,412.1 L257.0,411.7 L257.4,415.9 L257.8,415.6 L258.2,416.6 L258.6,416.7 L259.0,419.8 L259.4,418.8 L259.8,418.9 L260.2,419.7 L260.6,423.3 L261.0,420.9 L261.4,424.5 L261.8,423.2 L262.2,422.5 L262.6,419.6 L263.0,423.7 L263.4,423.2 L263.8,421.5 L264.2,423.6 L264.6,419.9 L265.0,420.8 L265.4,423.1 L265.8,418.2 L266.2,419.5 L266.6,420.8 L267.0,424.1 L267.4,424.6 L267.8,417.6 L268.2,421.6 L268.6,417.6 L269.0,420.1 L269.4,419.3 L269.8,419.6 L270.2,417.6 L270.6,417.5 L271.0,416.3 L271.4,417.2 L271.8,423.4 L272.2,420.1 L272.6,419.2 L273.0,422.0 L273.4,422.7 L273.8,421.8 L274.2,424.6 L274.6,428.5 L275.0,425.1 L275.4,429.3 L275.8,430.3 L276.2,427.7 L276.6,432.8 L277.0,433.5 L277.4,431.5 L277.8,430.1 L278.2,430.1 L278.6,428.9 L279.0,431.3 L279.4,433.2 L279.8,432.0 L280.2,427.7 L280.6,424.9 L281.0,424.7 L281.4,425.5 L281.8,419.3 L282.2,415.7 L282.6,414.0 L283.0,414.2 L283.4,416.5 L283.8,419.2 L284.2,417.5 L284.6,415.6 L285.0,420.2 L285.4,422.8 L285.8,421.4 L286.2,422.1 L286.6,419.4 L287.0,420.3 L287.4,421.9 L287.8,417.3 L288.2,420.0 L288.6,416.5 L289.0,413.3 L289.4,417.1 L289.8,415.7 L290.2,411.2 L290.6,411.8 L291.0,408.1 L291.4,410.6 L291.8,409.9 L292.2,410.0 L292.6,408.6 L293.0,408.4 L293.4,411.2 L293.8,412.2 L294.2,415.2 L294.6,416.6 L295.0,413.3 L295.4,414.2 L295.8,415.1 L296.2,420.0 L296.6,415.8 L297.0,419.0 L297.4,424.4 L297.8,422.7 L298.2,425.9 L298.6,426.7 L299.0,422.0 L299.4,419.7 L299.8,419.3 L300.2,414.5 L300.6,415.7 L301.0,416.4 L301.4,419.1 L301.8,424.8 L302.2,427.0 L302.6,431.4 L303.0,430.9 L303.4,430.0 L303.8,426.9 L304.2,421.4 L304.6,420.8 L305.0,416.3 L305.4,417.9 L305.8,412.5 L306.2,416.2 L306.6,415.0 L307.0,410.8 L307.4,405.9 L307.8,406.5 L308.2,402.1 L308.6,402.4 L309.0,399.5 L309.4,400.8 L309.8,399.9 L310.2,401.2 L310.6,402.0 L311.0,402.6 L311.4,408.5 L311.8,406.2 L312.2,411.2 L312.6,415.7 L313.0,415.6 L313.4,418.2 L313.8,416.0 L314.2,417.2 L314.6,413.2 L315.0,415.9 L315.4,413.7 L315.8,411.6 L316.2,418.4 L316.6,427.9 L317.0,431.2 L317.4,428.3 L317.8,425.8 L318.2,421.5 L318.6,423.6 L319.0,423.1 L319.4,423.0 L319.8,420.7 L320.2,415.2 L320.6,413.9 L321.0,412.3 L321.4,411.3 L321.8,413.2 L322.2,412.5 L322.6,411.2 L323.0,408.6 L323.4,409.0 L323.8,413.2 L324.2,407.3 L324.6,408.2 L325.0,405.8 L325.4,405.8 L325.8,408.2 L326.2,405.7 L326.6,404.3 L327.0,407.7 L327.4,408.4 L327.8,409.7 L328.2,406.5 L328.6,408.2 L329.0,409.1 L329.4,408.9 L329.8,410.8 L330.2,410.0 L330.6,408.2 L331.0,407.9 L331.4,408.5 L331.8,411.7 L332.2,413.1 L332.6,412.2 L333.0,412.7 L333.4,413.5 L333.8,420.9 L334.2,420.9 L334.6,413.8 L335.0,410.7 L335.4,406.2 L335.8,401.2 L336.2,399.7 L336.6,401.3 L337.0,398.6 L337.4,397.5 L337.8,400.3 L338.2,399.4 L338.6,398.3 L339.0,398.6 L339.4,398.7 L339.8,403.4 L340.2,401.7 L340.6,403.6 L341.0,408.0 L341.4,409.3 L341.8,407.2 L342.2,408.0 L342.6,412.3 L343.0,412.8 L343.4,417.9 L343.8,418.0 L344.2,416.7 L344.6,416.7 L345.0,415.5 L345.4,413.9 L345.8,415.9 L346.2,410.8 L346.6,410.2 L347.0,411.5 L347.4,410.2 L347.8,408.3 L348.2,409.6 L348.6,411.1 L349.0,410.2 L349.4,408.9 L349.8,411.5 L350.2,412.8 L350.6,417.7 L351.0,419.3 L351.4,420.1 L351.8,418.7 L352.2,416.6 L352.6,415.8 L353.0,417.9 L353.4,414.1 L353.8,411.4 L354.2,410.6 L354.6,411.2 L355.0,406.8 L355.4,410.1 L355.8,404.8 L356.2,403.3 L356.6,398.2 L357.0,402.3 L357.4,405.4 L357.8,405.5 L358.2,407.4 L358.6,408.4 L359.0,411.7 L359.4,413.7 L359.8,417.9 L360.2,417.3 L360.6,413.2 L361.0,421.6 L361.4,424.8 L361.8,420.1 L362.2,420.3 L362.6,417.5 L363.0,416.3 L363.4,410.6 L363.8,406.9 L364.2,408.0 L364.6,410.3 L365.0,410.3 L365.4,415.1 L365.8,412.1 L366.2,416.4 L366.6,418.4 L367.0,419.0 L367.4,418.8 L367.8,418.9 L368.2,422.2 L368.6,421.1 L369.0,417.2 L369.4,419.1 L369.8,414.9 L370.2,411.8 L370.6,411.7 L371.0,408.9 L371.4,409.6 L371.8,406.7 L372.2,403.2 L372.6,403.0 L373.0,407.6 L373.4,406.8 L373.8,410.5 L374.2,411.0 L374.6,411.3 L375.0,412.2 L375.4,413.3 L375.8,414.3 L376.2,415.7 L376.6,416.9 L377.0,417.7 L377.4,420.5 L377.8,418.6 L378.2,418.2 L378.6,420.6 L379.0,423.1 L379.4,420.1 L379.8,421.4 L380.2,421.6 L380.6,424.0 L381.0,422.6 L381.4,423.1 L381.8,417.8 L382.2,420.4 L382.6,419.2 L383.0,421.4 L383.4,418.0 L383.8,417.4 L384.2,417.7 L384.6,415.6 L385.0,413.4 L385.4,412.3 L385.8,413.4 L386.2,413.2 L386.6,412.3 L387.0,416.0 L387.4,419.0 L387.8,423.0 L388.2,422.0 L388.6,422.9 L389.0,418.2 L389.4,417.2 L389.8,415.8 L390.2,419.6 L390.6,410.3 L391.0,413.1 L391.4,409.1 L391.8,406.4 L392.2,408.2 L392.6,408.2 L393.0,411.1 L393.4,409.9 L393.8,411.6 L394.2,410.4 L394.6,411.0 L395.0,405.4 L395.4,413.1 L395.8,410.3 L396.2,409.6 L396.6,409.6 L397.0,409.1 L397.4,409.3 L397.8,403.1 L398.2,409.4 L398.6,404.9 L399.0,404.9 L399.4,402.7 L399.8,404.0 L400.2,409.8 L400.6,410.3 L401.0,416.3 L401.4,417.3 L401.8,420.0 L402.2,418.6 L402.6,414.9 L403.0,412.8 L403.4,417.3 L403.8,417.1 L404.2,415.5 L404.6,420.2 L405.0,420.5 L405.4,420.2 L405.8,420.5 L406.2,419.1 L406.6,413.7 L407.0,412.4 L407.4,409.9 L407.8,406.7 L408.2,405.5 L408.6,404.6 L409.0,405.4 L409.4,403.4 L409.8,399.7 L410.2,399.4 L410.6,404.8 L411.0,407.1 L411.4,404.7 L411.8,407.5 L412.2,409.8 L412.6,409.2 L413.0,409.2 L413.4,407.1 L413.8,406.6 L414.2,404.8 L414.6,405.5 L415.0,404.2 L415.4,403.6 L415.8,405.7 L416.2,403.4 L416.6,402.4 L417.0,401.0 L417.4,403.0 L417.8,403.6 L418.2,408.2 L418.6,409.0 L419.0,413.2 L419.4,411.5 L419.8,412.7 L420.2,412.5 L420.6,414.4 L421.0,416.6 L421.4,416.1 L421.8,417.4 L422.2,415.4 L422.6,419.3 L423.0,417.0 L423.4,419.9 L423.8,425.2 L424.2,418.5 L424.6,419.9 L425.0,420.9 L425.4,420.5 L425.8,425.2 L426.2,420.5 L426.6,419.0 L427.0,415.7 L427.4,411.6 L427.8,412.0 L428.2,410.8 L428.6,406.4 L429.0,407.0 L429.4,404.2 L429.8,402.0 L430.2,396.6 L430.6,400.3 L431.0,396.5 L431.4,396.2 L431.8,396.7 L432.2,393.5 L432.6,392.6 L433.0,395.3 L433.4,392.0 L433.8,390.0 L434.2,390.4 L434.6,389.2 L435.0,392.6 L435.4,393.6 L435.8,394.2 L436.2,404.2 L436.6,405.4 L437.0,411.4 L437.4,410.0 L437.8,402.4 L438.2,395.5 L438.6,391.3 L439.0,390.2 L439.4,391.9 L439.8,392.3 L440.2,392.6 L440.6,393.7 L441.0,394.8 L441.4,397.9 L441.8,400.9 L442.2,401.6 L442.6,400.2 L443.0,400.7 L443.4,404.9 L443.8,405.2 L444.2,403.6 L444.6,403.0 L445.0,404.1 L445.4,405.4 L445.8,409.0 L446.2,413.0 L446.6,407.3 L447.0,408.8 L447.4,411.3 L447.8,413.8 L448.2,410.6 L448.6,412.7 L449.0,414.0 L449.4,416.2 L449.8,419.1 L450.2,420.8 L450.6,421.1 L451.0,421.2 L451.4,417.8 L451.8,417.1 L452.2,414.9 L452.6,413.2 L453.0,411.4 L453.4,409.7 L453.8,412.0 L454.2,411.2 L454.6,410.8 L455.0,409.8 L455.4,405.5 L455.8,408.5 L456.2,404.2 L456.6,405.1 L457.0,402.7 L457.4,402.6 L457.8,401.1 L458.2,400.4 L458.6,400.7 L459.0,400.4 L459.4,399.1 L459.8,400.6 L460.2,400.9 L460.6,398.9 L461.0,398.4 L461.4,400.0 L461.8,400.7 L462.2,402.6 L462.6,401.2 L463.0,400.2 L463.4,398.8 L463.8,396.8 L464.2,404.5 L464.6,405.7 L465.0,404.1 L465.4,404.4 L465.8,406.9 L466.2,410.6 L466.6,414.4 L467.0,414.5 L467.4,415.2 L467.8,418.4 L468.2,415.0 L468.6,413.2 L469.0,411.0 L469.4,407.0 L469.8,404.5 L470.2,404.9 L470.6,403.0 L471.0,404.7 L471.4,404.6 L471.8,405.2 L472.2,410.2 L472.6,410.2 L473.0,408.1 L473.4,405.7 L473.8,406.2 L474.2,405.6 L474.6,402.4 L475.0,403.8 L475.4,405.6 L475.8,406.2 L476.2,403.1 L476.6,400.8 L477.0,403.7 L477.4,402.7 L477.8,406.2 L478.2,404.6 L478.6,405.2 L479.0,407.8 L479.4,412.8 L479.8,408.8 L480.2,404.7 L480.6,405.2 L481.0,407.9 L481.4,403.6 L481.8,403.9 L482.2,403.2 L482.6,401.2 L483.0,400.2 L483.4,404.6 L483.8,399.4 L484.2,401.4 L484.6,402.1 L485.0,400.4 L485.4,401.4 L485.8,399.5 L486.2,399.9 L486.6,400.3 L487.0,403.0 L487.4,402.9 L487.8,407.2 L488.2,403.3 L488.6,404.1 L489.0,404.4 L489.4,404.5 L489.8,402.2 L490.2,402.4 L490.6,400.8 L491.0,404.5 L491.4,405.5 L491.8,404.9 L492.2,407.6 L492.6,407.1 L493.0,408.4 L493.4,407.7 L493.8,407.4 L494.2,408.2 L494.6,405.4 L495.0,403.2 L495.4,406.7 L495.8,402.2 L496.2,405.7 L496.6,404.1 L497.0,402.2 L497.4,403.1 L497.8,405.8 L498.2,405.2 L498.6,408.2 L499.0,411.6 L499.4,408.2 L499.8,408.1 L500.2,407.9 L500.6,403.9 L501.0,400.5 L501.4,399.8 L501.8,398.6 L502.2,397.6 L502.6,398.3 L503.0,405.5 L503.4,403.3 L503.8,402.5 L504.2,402.5 L504.6,404.2 L505.0,403.3 L505.4,396.3 L505.8,393.1 L506.2,391.2 L506.6,392.0 L507.0,393.4 L507.4,393.7 L507.8,394.9 L508.2,403.8 L508.6,399.8 L509.0,401.1 L509.4,403.7 L509.8,404.5 L510.2,406.8 L510.6,412.6 L511.0,413.7 L511.4,411.5 L511.8,408.1 L512.2,407.3 L512.6,405.6 L513.0,405.6 L513.4,403.1 L513.8,404.2 L514.2,401.9 L514.6,401.9 L515.0,404.2 L515.4,404.8 L515.8,404.2 L516.2,399.3 L516.6,400.6 L517.0,400.8 L517.4,402.4 L517.8,398.6 L518.2,401.9 L518.6,400.3 L519.0,398.7 L519.4,398.4 L519.8,395.6 L520.2,400.7 L520.6,401.4 L521.0,399.3 L521.4,397.2 L521.8,398.2 L522.2,400.1 L522.6,401.7 L523.0,399.9 L523.4,396.6 L523.8,400.5 L524.2,400.3 L524.6,401.9 L525.0,401.8 L525.4,403.7 L525.8,401.0 L526.2,400.7 L526.6,402.5 L527.0,405.1 L527.4,400.9 L527.8,401.4 L528.2,401.4 L528.6,404.3 L529.0,403.8 L529.4,399.9 L529.8,401.2 L530.2,400.7 L530.6,404.3 L531.0,407.1 L531.4,411.2 L531.8,407.2 L532.2,412.4 L532.6,415.6 L533.0,417.6 L533.4,414.3 L533.8,408.7 L534.2,410.0 L534.6,409.8 L535.0,403.5 L535.4,404.3 L535.8,402.5 L536.2,402.6 L536.6,403.2 L537.0,404.2 L537.4,402.4 L537.8,400.5 L538.2,402.3 L538.6,399.5 L539.0,400.8 L539.4,401.5 L539.8,399.9 L540.2,402.5 L540.6,400.6 L541.0,407.5 L541.4,400.4 L541.8,403.0 L542.2,400.9 L542.6,407.7 L543.0,408.1 L543.4,403.3 L543.8,403.4 L544.2,405.5 L544.6,405.1 L545.0,403.9 L545.4,406.2 L545.8,404.2 L546.2,402.7 L546.6,403.5 L547.0,402.7 L547.4,401.3 L547.8,400.2 L548.2,394.6 L548.6,392.2 L549.0,390.0 L549.4,393.3 L549.8,392.7 L550.2,394.5 L550.6,395.8 L551.0,394.1 L551.4,395.6 L551.8,398.6 L552.2,397.3 L552.6,398.8 L553.0,401.8 L553.4,403.1 L553.8,398.5 L554.2,401.1 L554.6,402.4 L555.0,400.4 L555.4,402.6 L555.8,400.9 L556.2,402.3 L556.6,400.2 L557.0,399.0 L557.4,401.8 L557.8,403.3 L558.2,403.1 L558.6,403.9 L559.0,401.9 L559.4,402.9 L559.8,407.4 L560.2,406.5 L560.6,408.6 L561.0,411.8 L561.4,409.2 L561.8,409.5 L562.2,414.5 L562.6,413.4 L563.0,416.9 L563.4,420.5 L563.8,416.6 L564.2,418.4 L564.6,418.1 L565.0,417.1 L565.4,413.3 L565.8,406.9 L566.2,410.4 L566.6,408.5 L567.0,407.0 L567.4,404.7 L567.8,403.2 L568.2,405.1 L568.6,403.6 L569.0,405.9 L569.4,406.6 L569.8,406.7 L570.2,403.2 L570.6,402.9 L571.0,400.1 L571.4,401.7 L571.8,403.2 L572.2,400.6 L572.6,399.9 L573.0,397.3 L573.4,400.6 L573.8,401.6 L574.2,400.5 L574.6,400.4 L575.0,398.4 L575.4,400.6 L575.8,400.5 L576.2,402.3 L576.6,399.1 L577.0,401.9 L577.4,399.0 L577.8,398.8 L578.2,399.8 L578.6,403.3 L579.0,405.2 L579.4,406.1 L579.8,405.3 L580.2,408.4 L580.6,402.6 L581.0,407.6 L581.4,405.8 L581.8,408.0 L582.2,407.6 L582.6,408.3 L583.0,404.9 L583.4,403.6 L583.8,401.5 L584.2,408.7 L584.6,406.3 L585.0,405.1 L585.4,404.5 L585.8,402.5 L586.2,403.2 L586.6,403.3 L587.0,403.0 L587.4,405.5 L587.8,404.9 L588.2,405.5 L588.6,406.9 L589.0,406.0 L589.4,406.9 L589.8,409.8 L590.2,408.4 L590.6,411.4 L591.0,409.7 L591.4,411.3 L591.8,410.5 L592.2,409.2 L592.6,406.9 L593.0,404.3 L593.4,404.5 L593.8,403.0 L594.2,401.9 L594.6,406.0 L595.0,407.0 L595.4,406.8 L595.8,406.2 L596.2,405.9 L596.6,410.3 L597.0,410.0 L597.4,412.1 L597.8,413.5 L598.2,411.9 L598.6,413.0 L599.0,418.0 L599.4,412.2 L599.8,414.3 L600.2,412.7 L600.6,412.9 L601.0,413.2 L601.4,410.3 L601.8,410.9 L602.2,409.7 L602.6,413.3 L603.0,415.1 L603.4,413.5 L603.8,416.1 L604.2,417.8 L604.6,416.2 L605.0,416.7 L605.4,418.0 L605.8,420.4 L606.2,412.1 L606.6,412.6 L607.0,413.8 L607.4,411.7 L607.8,407.6 L608.2,409.1 L608.6,407.2 L609.0,403.3 L609.4,400.1 L609.8,398.1 L610.2,398.7 L610.6,398.6 L611.0,396.7 L611.4,402.9 L611.8,397.4 L612.2,397.7 L612.6,400.4 L613.0,397.5 L613.4,399.5 L613.8,401.1 L614.2,398.6 L614.6,398.5 L615.0,398.1 L615.4,398.6 L615.8,401.8 L616.2,399.6 L616.6,406.5 L617.0,405.0 L617.4,406.6 L617.8,408.1 L618.2,412.3 L618.6,413.1 L619.0,412.1 L619.4,410.3 L619.8,407.8 L620.2,403.8 L620.6,406.8 L621.0,404.7 L621.4,405.9 L621.8,405.3 L622.2,407.4 L622.6,407.4 L623.0,406.6 L623.4,405.6 L623.8,405.7 L624.2,406.0 L624.6,407.9 L625.0,403.8 L625.4,402.6 L625.8,405.2 L626.2,403.7 L626.6,406.5 L627.0,407.7 L627.4,407.5 L627.8,408.6 L628.2,412.0 L628.6,410.3 L629.0,414.5 L629.4,413.4 L629.8,415.4 L630.2,421.8 L630.6,411.5 L631.0,415.5 L631.4,417.5 L631.8,417.7 L632.2,416.8 L632.6,419.0 L633.0,416.3 L633.4,417.6 L633.8,417.4 L634.2,413.1 L634.6,414.1 L635.0,410.2 L635.4,409.4 L635.8,410.6 L636.2,406.6 L636.6,407.1 L637.0,405.7 L637.4,400.8 L637.8,398.3 L638.2,401.6 L638.6,399.3 L639.0,398.6 L639.4,400.9 L639.8,399.0 L640.2,400.4 L640.6,400.4 L641.0,400.4 L641.4,404.7 L641.8,402.7 L642.2,401.3 L642.6,404.2 L643.0,408.4 L643.4,411.6 L643.8,411.8 L644.2,413.5 L644.6,411.4 L645.0,412.4 L645.4,416.0 L645.8,412.8 L646.2,412.3 L646.6,416.4 L647.0,415.8 L647.4,417.2 L647.8,415.1 L648.2,420.9 L648.6,414.6 L649.0,416.3 L649.4,417.8 L649.8,419.3 L650.2,416.3 L650.6,411.5 L651.0,415.7 L651.4,413.1 L651.8,420.1 L652.2,416.3 L652.6,416.0 L653.0,413.0 L653.4,410.7 L653.8,412.9 L654.2,409.8 L654.6,409.8 L655.0,411.2 L655.4,409.2 L655.8,408.3 L656.2,411.3 L656.6,412.4 L657.0,410.9 L657.4,413.8 L657.8,415.0 L658.2,412.2 L658.6,413.0 L659.0,414.3 L659.4,414.4 L659.8,410.7 L660.2,415.3 L660.6,409.3 L661.0,406.0 L661.4,407.1 L661.8,405.0 L662.2,407.7 L662.6,407.3 L663.0,405.0 L663.4,409.9 L663.8,405.7 L664.2,407.0 L664.6,409.6 L665.0,410.1 L665.4,413.6 L665.8,412.0 L666.2,411.1 L666.6,411.5 L667.0,407.9 L667.4,412.1 L667.8,413.8 L668.2,418.8 L668.6,415.7 L669.0,418.4 L669.4,420.7 L669.8,418.5 L670.2,418.2 L670.6,417.4 L671.0,413.9 L671.4,415.7 L671.8,408.3 L672.2,409.7 L672.6,409.0 L673.0,407.0 L673.4,397.2 L673.8,402.3 L674.2,403.2 L674.6,403.8 L675.0,399.7 L675.4,397.6 L675.8,392.1 L676.2,399.3 L676.6,399.9 L677.0,396.3 L677.4,397.9 L677.8,397.0 L678.2,397.6 L678.6,397.1 L679.0,394.8 L679.4,391.2 L679.8,389.3 L680.2,392.7 L680.6,394.3 L681.0,398.5 L681.4,402.5 L681.8,401.8 L682.2,401.8 L682.6,401.5 L683.0,397.7 L683.4,395.4 L683.8,392.2 L684.2,390.6 L684.6,389.0 L685.0,391.0 L685.4,389.8 L685.8,388.2 L686.2,390.0 L686.6,382.5 L687.0,387.5 L687.4,382.8 L687.8,381.4 L688.2,388.7 L688.6,387.4 L689.0,385.7 L689.4,386.6 L689.8,389.7 L690.2,387.5 L690.6,389.7 L691.0,392.7 L691.4,394.2 L691.8,389.3 L692.2,384.4 L692.6,384.5 L693.0,378.5 L693.4,376.7 L693.8,382.2 L694.2,381.3 L694.6,384.8 L695.0,386.1 L695.4,386.4 L695.8,391.4 L696.2,391.1 L696.6,399.3 L697.0,397.3 L697.4,398.8 L697.8,395.0 L698.2,391.3 L698.6,390.4 L699.0,390.7 L699.4,388.9 L699.8,388.4 L700.2,388.4 L700.6,388.5 L701.0,391.4 L701.4,391.6 L701.8,390.3 L702.2,389.5 L702.6,388.7 L703.0,393.5 L703.4,389.4 L703.8,395.0 L704.2,393.5 L704.6,397.3 L705.0,399.9 L705.4,399.3 L705.8,399.0 L706.2,399.6 L706.6,399.3 L707.0,403.4 L707.4,397.5 L707.8,404.7 L708.2,401.9 L708.6,404.5 L709.0,402.6 L709.4,404.1 L709.8,404.9 L710.2,408.1 L710.6,404.9 L711.0,401.6 L711.4,398.2 L711.8,397.2 L712.2,397.3 L712.6,397.7 L713.0,397.2 L713.4,400.4 L713.8,400.0 L714.2,403.1 L714.6,406.9 L715.0,408.0 L715.4,407.2 L715.8,413.0 L716.2,410.1 L716.6,412.4 L717.0,413.1 L717.4,414.6 L717.8,417.3 L718.2,413.1 L718.6,411.3 L719.0,413.8 L719.4,413.5 L719.8,412.0 L720.2,410.7 L720.6,407.3 L721.0,410.0 L721.4,417.5 L721.8,415.6 L722.2,413.9 L722.6,421.1 L723.0,420.0 L723.4,414.8 L723.8,418.6 L724.2,423.2 L724.6,420.7 L725.0,418.8 L725.4,419.6 L725.8,417.3 L726.2,415.6 L726.6,414.0 L727.0,413.7 L727.4,407.3 L727.8,410.0 L728.2,408.5 L728.6,414.8 L729.0,412.7 L729.4,414.8 L729.8,415.3 L730.2,420.1 L730.6,414.2 L731.0,422.8 L731.4,424.7 L731.8,421.6 L732.2,420.6 L732.6,421.6 L733.0,419.5 L733.4,418.1 L733.8,415.7 L734.2,417.5 L734.6,417.4 L735.0,412.4 L735.4,410.1 L735.8,410.0 L736.2,412.8 L736.6,415.7 L737.0,418.6 L737.4,416.2 L737.8,418.1 L738.2,422.2 L738.6,421.2 L739.0,424.6 L739.4,418.7 L739.8,424.1 L740.2,424.9 L740.6,426.9 L741.0,426.0 L741.4,427.1 L741.8,426.2 L742.2,423.1 L742.6,433.2 L743.0,428.0 L743.4,423.7 L743.8,428.1 L744.2,425.9 L744.6,425.9 L745.0,425.3 L745.4,424.8 L745.8,422.8 L746.2,420.6 L746.6,421.7 L747.0,429.7 L747.4,427.7 L747.8,427.2 L748.2,423.6 L748.6,420.3 L749.0,418.2 L749.4,418.3 L749.8,416.4 L750.2,413.2 L750.6,415.0 L751.0,414.7 L751.4,410.0 L751.8,415.3 L752.2,408.9 L752.6,410.4 L753.0,408.9 L753.4,407.4 L753.8,406.4 L754.2,408.2 L754.6,409.2 L755.0,412.6 L755.4,413.9 L755.8,411.2 L756.2,412.1 L756.6,413.5 L757.0,415.0 L757.4,406.9 L757.8,411.4 L758.2,407.7 L758.6,407.1 L759.0,409.8 L759.4,405.9 L759.8,408.7 L760.2,406.3 L760.6,407.1 L761.0,405.7 L761.4,408.0 L761.8,413.9 L762.2,408.0 L762.6,412.2 L763.0,413.9 L763.4,414.7 L763.8,416.4 L764.2,416.0 L764.6,415.4 L765.0,415.2 L765.4,418.5 L765.8,417.4 L766.2,416.9 L766.6,420.3 L767.0,416.3 L767.4,414.7 L767.8,413.9 L768.2,409.0 L768.6,413.0 L769.0,411.5 L769.4,413.2 L769.8,417.1 L770.2,414.3 L770.6,417.3 L771.0,418.9 L771.4,420.4 L771.8,418.4 L772.2,423.9 L772.6,425.0 L773.0,428.3 L773.4,430.6" fill="none" stroke="#ff0000" stroke-width="1.8" stroke-linejoin="miter" shape-rendering="crispEdges"/>
<g fill="#ff0000">
<rect x="335.8" y="206.7" width="2.3" height="134.3"/>
<rect x="334.8" y="341" width="3.4" height="19"/>
<rect x="335" y="360" width="3.8" height="42"/>
<rect x="327.1" y="363.6" width="2.6" height="21"/>
<rect x="327.5" y="384" width="2.1" height="26"/>
<rect x="611" y="126.5" width="1.5" height="61"/>
<rect x="609.9" y="186.9" width="3.4" height="182"/>
<rect x="611" y="368" width="2" height="31" fill="#b00000"/>
<rect x="609.5" y="368" width="1.9" height="31"/>
<rect x="612.6" y="368" width="1.9" height="31"/>
</g>
</svg>
</body></html>
